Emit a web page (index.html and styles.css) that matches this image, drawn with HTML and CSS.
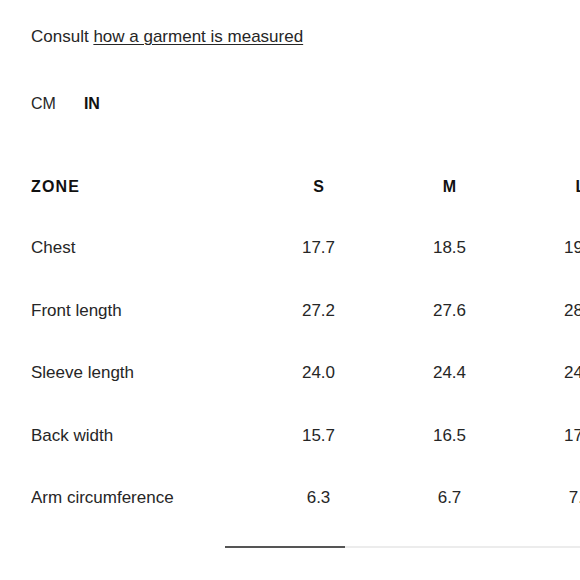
FILE: index.html
```html
<!DOCTYPE html>
<html>
<head>
<meta charset="utf-8">
<link rel="stylesheet" href="styles.css">
</head>
<body>
<div class="page">
  <p class="intro">Consult <a class="link" href="#">how a garment is measured</a></p>
  <div class="units">
    <span class="unit">CM</span>
    <span class="unit active">IN</span>
  </div>
  <div class="scroller">
    <div class="table">
      <div class="row head">
        <div class="zone">ZONE</div><div class="cell">S</div><div class="cell">M</div><div class="cell">L</div><div class="cell">XL</div>
      </div>
      <div class="row">
        <div class="zone">Chest</div><div class="cell">17.7</div><div class="cell">18.5</div><div class="cell">19.3</div><div class="cell">20.1</div>
      </div>
      <div class="row">
        <div class="zone">Front length</div><div class="cell">27.2</div><div class="cell">27.6</div><div class="cell">28.0</div><div class="cell">28.3</div>
      </div>
      <div class="row">
        <div class="zone">Sleeve length</div><div class="cell">24.0</div><div class="cell">24.4</div><div class="cell">24.8</div><div class="cell">25.2</div>
      </div>
      <div class="row">
        <div class="zone">Back width</div><div class="cell">15.7</div><div class="cell">16.5</div><div class="cell">17.3</div><div class="cell">18.1</div>
      </div>
      <div class="row">
        <div class="zone">Arm circumference</div><div class="cell">6.3</div><div class="cell">6.7</div><div class="cell">7.1</div><div class="cell">7.5</div>
      </div>
    </div>
  </div>
  <div class="track"><div class="thumb"></div></div>
</div>
</body>
</html>
```
FILE: styles.css
```css
html, body {
  margin: 0;
  padding: 0;
  background: #fff;
  overflow: hidden;
}
.page {
  padding: 25px 0 0 31px;
  font-family: "Liberation Sans", Arial, sans-serif;
  color: #262626;
  font-size: 17px;
}
.intro {
  margin: 0;
  line-height: 24px;
}
.link {
  color: #262626;
  text-decoration: underline;
  text-underline-offset: 2px;
  text-decoration-thickness: 1px;
}
.units {
  margin-top: 43px;
  display: flex;
  gap: 28px;
  line-height: 24px;
  font-size: 16px;
}
.unit.active {
  font-weight: bold;
  color: #111;
}
.scroller {
  margin-top: 40px;
  overflow: hidden;
}
.table {
  display: flex;
  flex-direction: column;
  width: max-content;
}
.row {
  display: grid;
  grid-template-columns: 222px repeat(4, 131px);
  height: 62.5px;
  align-items: center;
}
.row.head {
  height: 61px;
  font-weight: bold;
  font-size: 16px;
  color: #111;
}
.head .zone {
  letter-spacing: 1.2px;
}
.cell {
  text-align: center;
}
.track {
  margin: 16px 0 0 194px;
  height: 2px;
  background: #ececec;
  display: flex;
}
.thumb {
  width: 120px;
  height: 2px;
  background: #555;
}
```
